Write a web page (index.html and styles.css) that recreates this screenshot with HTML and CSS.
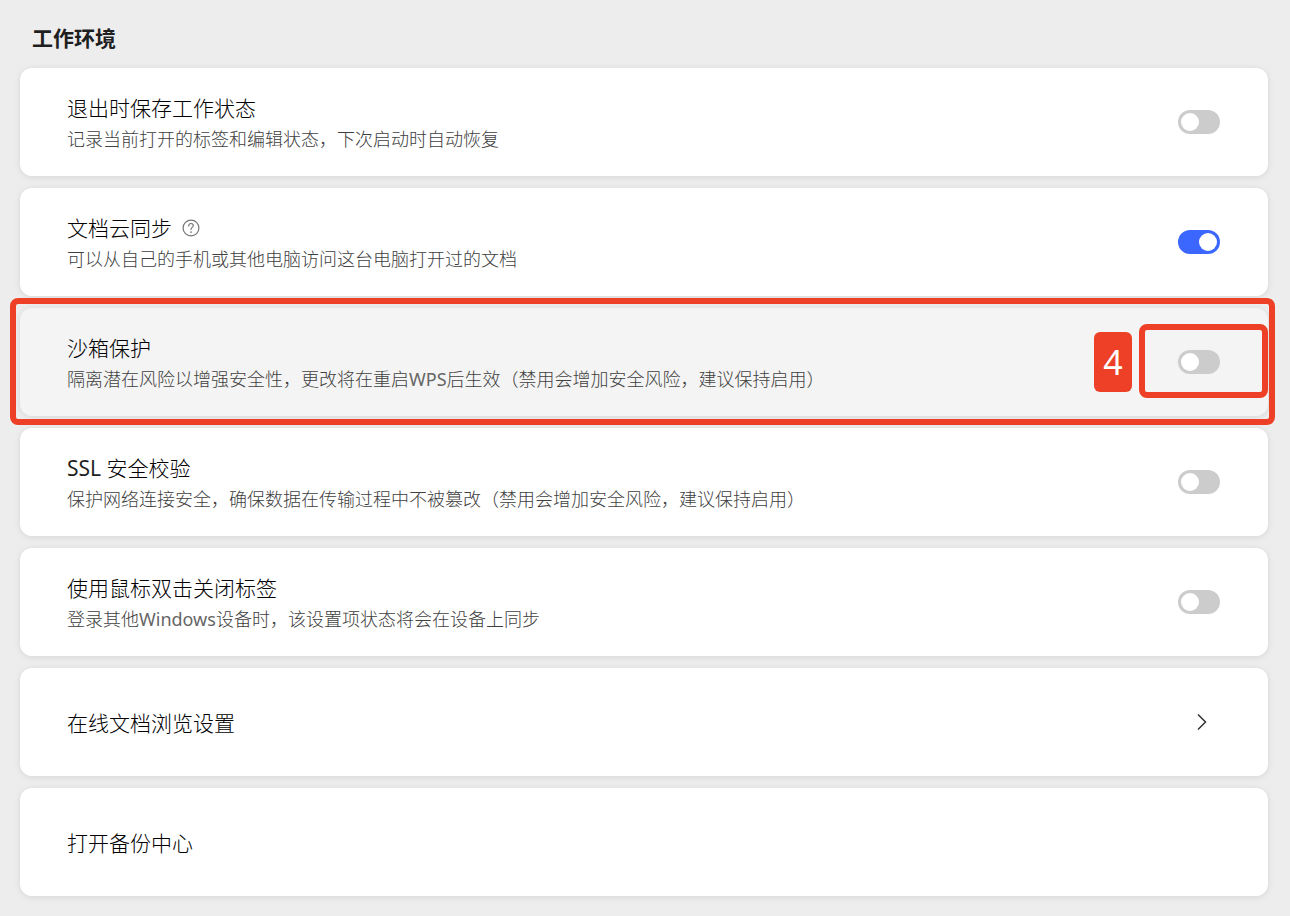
FILE: index.html
```html
<!DOCTYPE html>
<html lang="zh-CN">
<head>
<meta charset="utf-8">
<meta name="viewport" content="width=device-width, initial-scale=1">
<title>工作环境</title>
<link rel="stylesheet" href="styles.css">
</head>
<body>
<main class="settings">
  <h1 class="heading">工作环境</h1>
  <div class="list">
    <section class="row">
      <div class="text">
        <label class="title" for="save-state">退出时保存工作状态</label>
        <p class="desc">记录当前打开的标签和编辑状态，下次启动时自动恢复</p>
      </div>
      <input class="switch" type="checkbox" role="switch" id="save-state">
    </section>
    <section class="row">
      <div class="text">
        <div class="title-line">
          <label class="title" for="cloud-sync">文档云同步</label>
          <button class="help" type="button" aria-label="帮助">
            <svg width="18" height="18" viewBox="0 0 18 18" fill="none" stroke="currentColor" stroke-width="1.2" stroke-linecap="round">
              <circle cx="9" cy="9" r="7.9"/>
              <path d="M6.7 7C6.7 5.4 7.6 4.5 9 4.5s2.3.9 2.3 2.1c0 1.7-2.3 2-2.3 3.9"/>
              <circle cx="9" cy="13.1" r=".9" fill="currentColor" stroke="none"/>
            </svg>
          </button>
        </div>
        <p class="desc">可以从自己的手机或其他电脑访问这台电脑打开过的文档</p>
      </div>
      <input class="switch" type="checkbox" role="switch" id="cloud-sync" checked>
    </section>
    <section class="row row-active">
      <div class="text">
        <label class="title" for="sandbox">沙箱保护</label>
        <p class="desc">隔离潜在风险以增强安全性，更改将在重启<span class="latin">WPS</span>后生效（禁用会增加安全风险，建议保持启用）</p>
      </div>
      <input class="switch" type="checkbox" role="switch" id="sandbox">
      <span class="step">4</span>
      <span class="frame frame-switch"></span>
      <span class="frame frame-row"></span>
    </section>
    <section class="row">
      <div class="text">
        <label class="title" for="ssl"><span class="latin">SSL</span> 安全校验</label>
        <p class="desc">保护网络连接安全，确保数据在传输过程中不被篡改（禁用会增加安全风险，建议保持启用）</p>
      </div>
      <input class="switch" type="checkbox" role="switch" id="ssl">
    </section>
    <section class="row">
      <div class="text">
        <label class="title" for="double-click">使用鼠标双击关闭标签</label>
        <p class="desc">登录其他<span class="latin">Windows</span>设备时，该设置项状态将会在设备上同步</p>
      </div>
      <input class="switch" type="checkbox" role="switch" id="double-click">
    </section>
    <a class="row" href="#online">
      <span class="title">在线文档浏览设置</span>
      <svg class="chevron" width="10" height="18" viewBox="0 0 10 18" fill="none" stroke="currentColor" stroke-width="1.5"><path d="M1 1.5 8.5 9 1 16.5"/></svg>
    </a>
    <a class="row" href="#backup">
      <span class="title">打开备份中心</span>
    </a>
  </div>
</main>
</body>
</html>
```

FILE: styles.css
```css
* {
  box-sizing: border-box;
}

body {
  margin: 0;
  background: #ededed;
  color: #000;
  font-family: "Noto Sans", "Noto Sans CJK SC", sans-serif;
  font-weight: 300;
}

.settings {
  padding: 20px 22px 20px 20px;
}

.heading {
  margin: 0;
  padding: 0 12px 12px;
  color: #1f1f1f;
  font-size: 21px;
  line-height: 36px;
  font-weight: 700;
}

.list {
  display: grid;
  gap: 12px;
}

.row {
  position: relative;
  display: flex;
  align-items: center;
  justify-content: space-between;
  gap: 24px;
  min-height: 108px;
  padding: 22px 48px 20px 47px;
  border-radius: 12px;
  background: #fff;
  box-shadow: 0 1px 6px rgba(0, 0, 0, 0.1);
  color: inherit;
  text-decoration: none;
}

.row-active {
  background: #f4f4f4;
}

.text {
  display: flex;
  flex-direction: column;
  align-items: flex-start;
}

.title-line {
  display: flex;
  align-items: center;
  gap: 10px;
}

.title {
  font-size: 21px;
  line-height: 32px;
}

.desc {
  margin: 0;
  color: #404040;
  font-size: 18px;
  line-height: 30px;
}

.latin {
  font-weight: 400;
}

.title .latin {
  color: #1f1f1f;
}

.desc .latin {
  color: #666;
}

.help {
  display: flex;
  padding: 0;
  border: 0;
  background: none;
  color: #757575;
}

.switch {
  appearance: none;
  flex: none;
  display: flex;
  width: 42px;
  height: 24px;
  margin: 0 0 2px;
  padding: 3px;
  border-radius: 12px;
  background: #ccc;
}

.switch::before {
  content: "";
  width: 18px;
  height: 18px;
  border-radius: 50%;
  background: #fff;
}

.switch:checked {
  justify-content: flex-end;
  background: #3b67ff;
}

.chevron {
  margin: 0 13px 2px 0;
  color: #333;
}

.frame {
  position: absolute;
  border: 6px solid #ed4026;
  border-radius: 8px;
  pointer-events: none;
}

.frame-row {
  inset: -10px -7px -9px -10px;
}

.frame-switch {
  top: 16px;
  right: 0;
  width: 129px;
  height: 74px;
}

.step {
  position: absolute;
  top: 24px;
  right: 136px;
  width: 38px;
  height: 60px;
  border-radius: 6px;
  background: #ed4026;
  color: #fff;
  font-size: 34px;
  line-height: 60px;
  font-weight: 400;
  text-align: center;
}
```
